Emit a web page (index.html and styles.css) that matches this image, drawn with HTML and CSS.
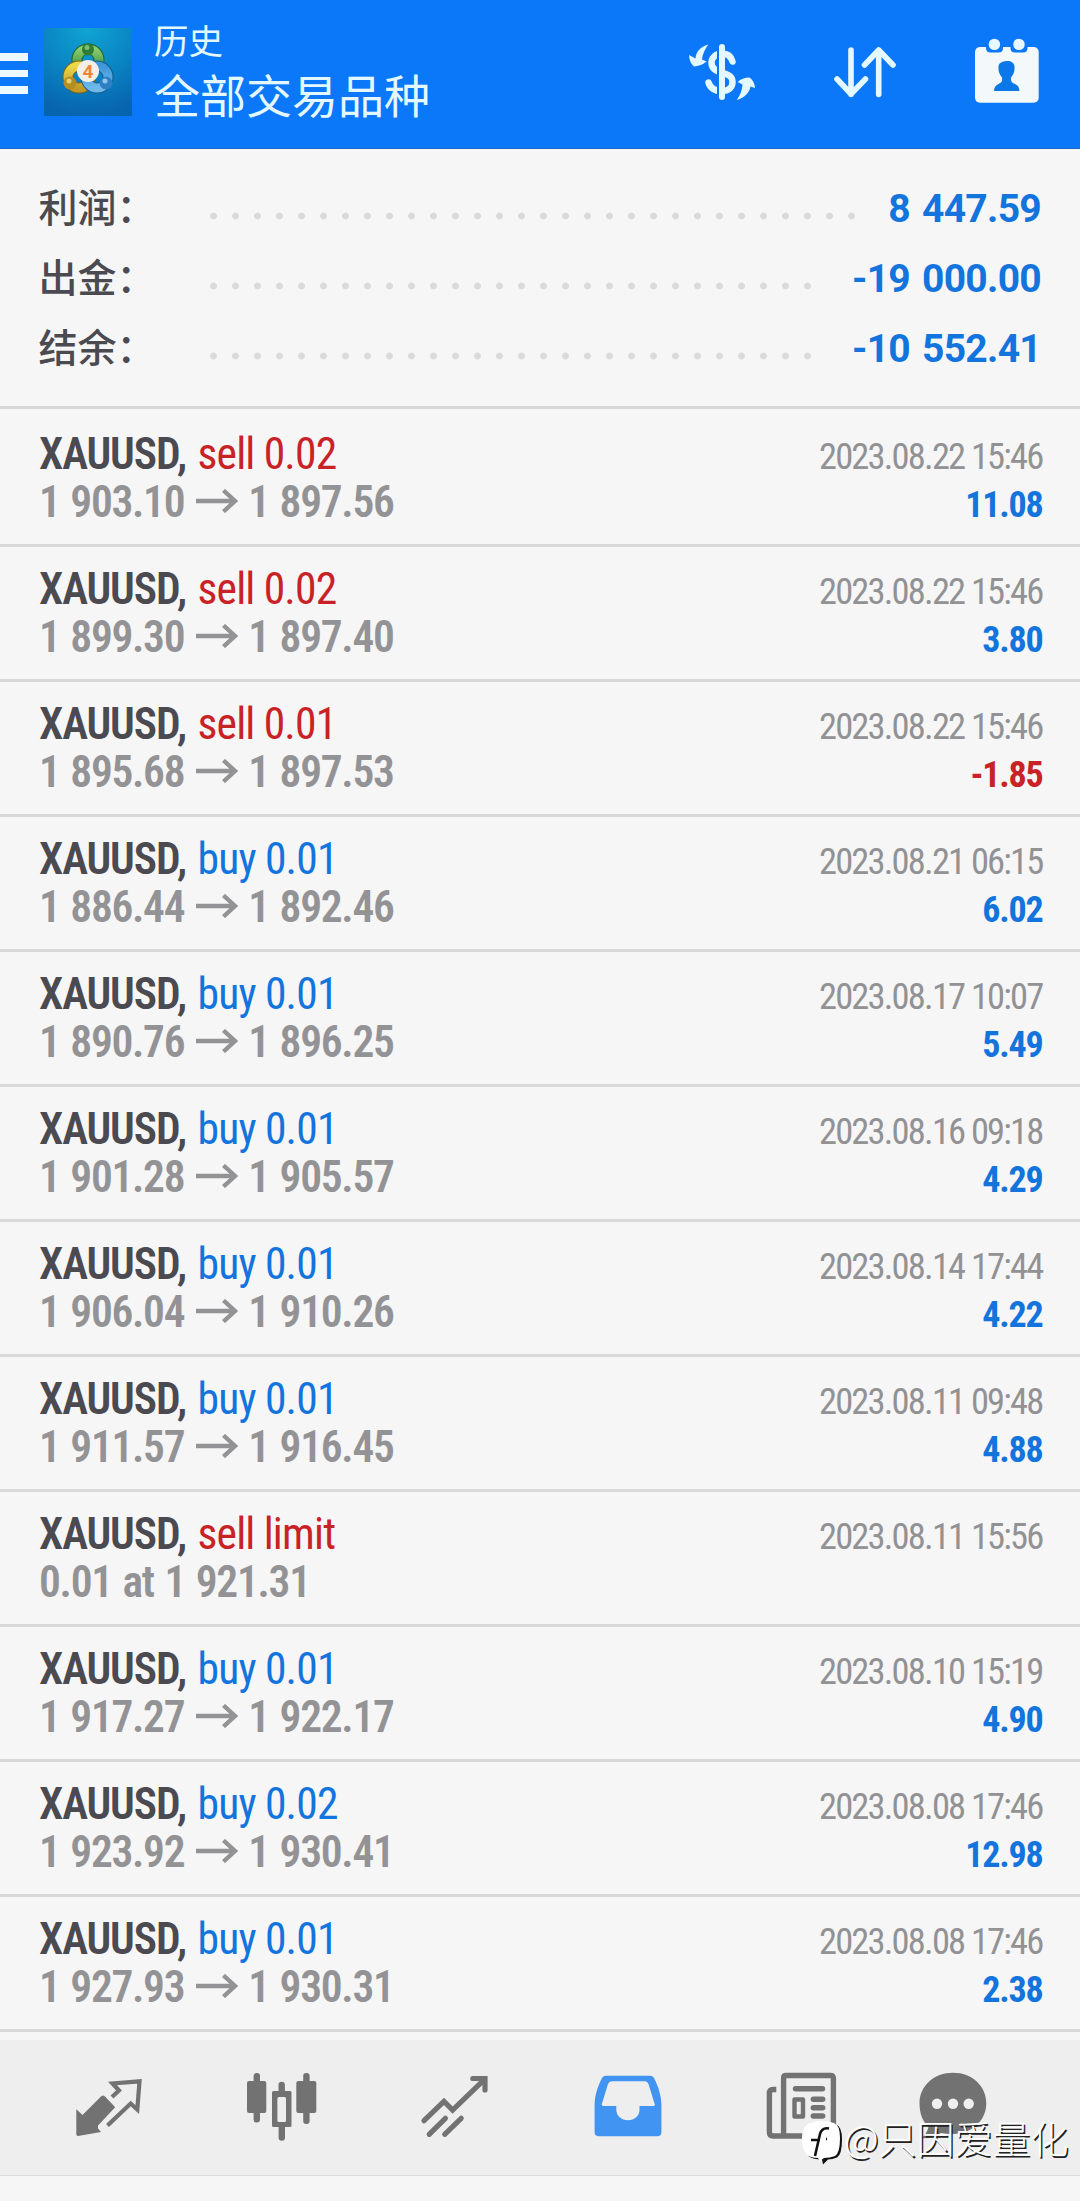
FILE: index.html
```
<!DOCTYPE html>
<html lang="zh-CN">
<head>
<meta charset="utf-8">
<title>历史</title>
<link rel="stylesheet" href="styles.css">
</head>
<body>
<svg class="defs" aria-hidden="true">
  <symbol id="arrow" viewBox="0 0 42 24"><path d="M0 12H39M27.5 1.5L39 12L27.5 22.5" fill="none" stroke="currentColor" stroke-width="4.4"/></symbol>
</svg>

<header class="bar">
  <div class="menu"><i></i><i></i><i></i></div>
  <svg class="logo" viewBox="0 0 88 88">
    <defs>
      <radialGradient id="sky" cx=".5" cy="0" r="1"><stop offset="0" stop-color="#10a5d2"/><stop offset=".5" stop-color="#0a86c4"/><stop offset="1" stop-color="#0764ae"/></radialGradient>
      <linearGradient id="gr" x2="0" y2="1"><stop offset="0" stop-color="#8ccb6e"/><stop offset="1" stop-color="#2f8a3a"/></linearGradient>
      <linearGradient id="ye" x2="0" y2="1"><stop offset="0" stop-color="#ecd848"/><stop offset="1" stop-color="#c39a28"/></linearGradient>
      <linearGradient id="bl" x2="0" y2="1"><stop offset="0" stop-color="#3f97d8"/><stop offset="1" stop-color="#6fb9ea"/></linearGradient>
    </defs>
    <rect width="88" height="88" fill="url(#sky)"/>
    <circle cx="44" cy="32" r="11" fill="none" stroke="#1d662c" stroke-width="11"/>
    <circle cx="44" cy="32" r="11" fill="none" stroke="url(#gr)" stroke-width="9"/>
    <circle cx="35" cy="49" r="11" fill="none" stroke="#73651c" stroke-width="11"/>
    <circle cx="35" cy="49" r="11" fill="none" stroke="url(#ye)" stroke-width="9"/>
    <circle cx="53" cy="49" r="11" fill="none" stroke="#155a8e" stroke-width="11"/>
    <circle cx="53" cy="49" r="11" fill="none" stroke="url(#bl)" stroke-width="9"/>
    <circle cx="44" cy="21.500" r="6" fill="#2e7c35"/><circle cx="43" cy="19.500" r="2.500" fill="#7dbf72"/>
    <circle cx="26" cy="55" r="6.500" fill="#b28d23"/><circle cx="25" cy="53" r="2.500" fill="#ead06a"/>
    <circle cx="62" cy="55" r="6.500" fill="#2f7fc4"/><circle cx="61" cy="53" r="2.500" fill="#8cc6ee"/>
    <circle cx="44" cy="43" r="11" fill="#f4eee8"/>
    <text x="44" y="49.500" class="four">4</text>
  </svg>
  <div class="titles"><div class="t1">历史</div><div class="t2">全部交易品种</div></div>
  <div class="tools">
    <svg viewBox="0 0 80 80">
      <g fill="#e4f8ff">
        <path d="M26.300 12.500C18 15 14 20 13.500 26.500L7 23Q7.500 31 12 34.500Q19 34 24.700 29.500L20 27.500C20.500 22 23 17 26.300 12.500Z"/>
        <path d="M54.700 68C63 65.500 67.500 60.500 68.500 54.500L73 56Q72.500 49 67.500 45.500Q60 45.500 55.700 50L60.500 52.500C60 59 58 63.500 54.700 68Z"/>
      </g>
      <path d="M50.500 29.500C49 24 45 21.500 40 21.500C33.500 21.500 29.500 26 29.500 30.500C29.500 36 33 39 40 40.800C47 42.500 50.500 44.500 50.500 50C50.500 56 46 59 40 59C32.500 59 28 55.500 26.500 50.500" fill="none" stroke="#e4f8ff" stroke-width="6.500" stroke-linecap="round"/>
      <path d="M36 16V65" stroke="#0a78f8" stroke-width="2"/>
      <path d="M40 15V65" stroke="#e4f8ff" stroke-width="6" stroke-linecap="round"/>
    </svg>
    <svg viewBox="0 0 80 80"><path d="M26 18V62.500M12 47L26 62L40.500 47M53.700 62.500V18M39.500 33L53.700 18L68 33" fill="none" stroke="#e4f8ff" stroke-width="5.600" stroke-linecap="round" stroke-linejoin="round"/></svg>
    <svg viewBox="0 0 80 80">
      <rect x="8" y="15" width="63.700" height="55.700" rx="5" fill="#f3f8fb"/>
      <path d="M19 14V16Q19 20.500 23.500 20.500H31.500Q36 20.500 36 16V14ZM43.500 14V16Q43.500 20.500 48 20.500H56Q60.500 20.500 60.500 16V14Z" fill="#0a78f8"/>
      <circle cx="27.400" cy="12.400" r="5.700" fill="#e9f8ff"/><circle cx="52" cy="12.400" r="5.700" fill="#e9f8ff"/>
      <path d="M39.500 29C43 28.500 47.500 30.500 47.500 34.500Q48 41 44 45.500C43.500 49.500 45 50.500 48 52Q52.500 54 52.300 59H27Q27 54 31.500 52C34.500 50.500 35.500 49.500 35 45.500Q31 41 31.500 34.500C31.700 31 35 29.500 39.500 29Z" fill="#0a78e8"/>
    </svg>
  </div>
</header>

<section class="summary">
  <div class="sum"><span class="label">利润：</span><i class="dots long"></i><b>8 447.59</b></div>
  <div class="sum"><span class="label">出金：</span><i class="dots"></i><b>-19 000.00</b></div>
  <div class="sum"><span class="label">结余：</span><i class="dots"></i><b>-10 552.41</b></div>
</section>

<main class="deals">
  <article class="deal"><div class="line"><b>XAUUSD,</b><span class="sell">sell 0.02</span><time>2023.08.22 15:46</time></div><div class="line price"><span>1 903.10</span><svg><use href="#arrow"/></svg><span>1 897.56</span><em>11.08</em></div></article>
  <article class="deal"><div class="line"><b>XAUUSD,</b><span class="sell">sell 0.02</span><time>2023.08.22 15:46</time></div><div class="line price"><span>1 899.30</span><svg><use href="#arrow"/></svg><span>1 897.40</span><em>3.80</em></div></article>
  <article class="deal"><div class="line"><b>XAUUSD,</b><span class="sell">sell 0.01</span><time>2023.08.22 15:46</time></div><div class="line price"><span>1 895.68</span><svg><use href="#arrow"/></svg><span>1 897.53</span><em class="loss">-1.85</em></div></article>
  <article class="deal"><div class="line"><b>XAUUSD,</b><span class="buy">buy 0.01</span><time>2023.08.21 06:15</time></div><div class="line price"><span>1 886.44</span><svg><use href="#arrow"/></svg><span>1 892.46</span><em>6.02</em></div></article>
  <article class="deal"><div class="line"><b>XAUUSD,</b><span class="buy">buy 0.01</span><time>2023.08.17 10:07</time></div><div class="line price"><span>1 890.76</span><svg><use href="#arrow"/></svg><span>1 896.25</span><em>5.49</em></div></article>
  <article class="deal"><div class="line"><b>XAUUSD,</b><span class="buy">buy 0.01</span><time>2023.08.16 09:18</time></div><div class="line price"><span>1 901.28</span><svg><use href="#arrow"/></svg><span>1 905.57</span><em>4.29</em></div></article>
  <article class="deal"><div class="line"><b>XAUUSD,</b><span class="buy">buy 0.01</span><time>2023.08.14 17:44</time></div><div class="line price"><span>1 906.04</span><svg><use href="#arrow"/></svg><span>1 910.26</span><em>4.22</em></div></article>
  <article class="deal"><div class="line"><b>XAUUSD,</b><span class="buy">buy 0.01</span><time>2023.08.11 09:48</time></div><div class="line price"><span>1 911.57</span><svg><use href="#arrow"/></svg><span>1 916.45</span><em>4.88</em></div></article>
  <article class="deal"><div class="line"><b>XAUUSD,</b><span class="sell">sell limit</span><time>2023.08.11 15:56</time></div><div class="line price"><span>0.01 at 1 921.31</span></div></article>
  <article class="deal"><div class="line"><b>XAUUSD,</b><span class="buy">buy 0.01</span><time>2023.08.10 15:19</time></div><div class="line price"><span>1 917.27</span><svg><use href="#arrow"/></svg><span>1 922.17</span><em>4.90</em></div></article>
  <article class="deal"><div class="line"><b>XAUUSD,</b><span class="buy">buy 0.02</span><time>2023.08.08 17:46</time></div><div class="line price"><span>1 923.92</span><svg><use href="#arrow"/></svg><span>1 930.41</span><em>12.98</em></div></article>
  <article class="deal"><div class="line"><b>XAUUSD,</b><span class="buy">buy 0.01</span><time>2023.08.08 17:46</time></div><div class="line price"><span>1 927.93</span><svg><use href="#arrow"/></svg><span>1 930.31</span><em>2.38</em></div></article>
</main>

<nav class="tabs">
  <a class="tab"><svg viewBox="0 0 80 80">
    <path d="M38.500 60.500L61.700 38.500L68.300 44.500L70.500 16.300L43.500 18.500L50 25.500L43 32" fill="none" stroke="currentColor" stroke-width="4.200"/>
    <path d="M7.300 44.300L13.500 50L32 31.500Q34 29.500 36 31.500L46.200 42.300L29 60.500V63.500L32 67L9 71Q7.300 71 7.300 69Z" fill="currentColor"/>
  </svg></a>
  <a class="tab"><svg viewBox="0 0 80 80" fill="currentColor">
    <rect x="5" y="16" width="19.300" height="32" rx="2"/><rect x="11.600" y="8" width="6.400" height="49.500" rx="3"/>
    <rect x="54.300" y="16" width="20" height="32" rx="2"/><rect x="61.200" y="8" width="6.400" height="51" rx="3"/>
    <path d="M31.500 26H36.500V20a3.200 3.200 0 0 1 6.400 0V26H48Q49.500 26 49.500 27.500V60.500Q49.500 62 48 62H43V72.500a3.200 3.200 0 0 1-6.400 0V62H31.500Q30 62 30 60.500V27.500Q30 26 31.500 26ZM37 32Q35.400 32 35.400 33.500V55.500Q35.400 57 37 57H42.500Q44 57 44 55.500V33.500Q44 32 42.500 32Z" fill-rule="evenodd"/>
  </svg></a>
  <a class="tab"><svg viewBox="0 0 80 80"><path d="M9 55.700L29 36.300L37.600 45L70 13.800M57.800 13.500H70V25M14.200 69.300L30.400 53.300M29.700 69.300L46.200 53.300" fill="none" stroke="currentColor" stroke-width="5.200" stroke-linecap="round"/></svg></a>
  <a class="tab active"><svg viewBox="0 0 80 80"><path d="M18 10.700H62Q65 10.700 66.500 14C70.500 22 73.400 31 73.400 40V67Q73.400 71.300 69 71.300H11Q6.600 71.300 6.600 67V40C6.600 31 9.500 22 13.500 14Q15 10.700 18 10.700ZM24 16.300Q21 16.300 20 19L14 38.500Q13.200 41 15.500 41H28.300V44.500C28.300 51 33.500 55.300 40 55.300S51.500 51 51.500 44.500V41H65.500Q67.500 41 66.500 38.500L60.500 19Q59.500 16.300 57 16.300Z" fill="currentColor" fill-rule="evenodd"/></svg></a>
  <a class="tab"><svg viewBox="0 0 80 80" fill="none" stroke="currentColor">
    <path d="M22.600 13Q22.600 10.500 25 10.500H69.500Q72.400 10.500 72.400 13.500V67.500Q72.400 71 69.500 71H12Q8.400 71 8.400 67V28.500Q8.400 24.500 12 24.500H15.300M22.600 13V71" stroke-width="5.400"/>
    <path d="M34.500 23.700H61.500M52.300 34.300H61.700M52.300 42.700H61.700M52.300 51H61.700" stroke-width="5.400" stroke-linecap="round"/>
    <rect x="33.500" y="34.500" width="8.500" height="17" stroke-width="4.400" stroke-linejoin="round"/>
  </svg></a>
  <a class="tab last"><svg viewBox="0 0 80 80"><path d="M40 7.700C59 7.700 73.300 21 73.300 38.300S59 69 40 69Q33 69 28 68Q20 73 8 73.500Q14 69 15.500 62C10 57 6.500 49 6.500 38.300C6.500 21 21 7.700 40 7.700Z" fill="currentColor"/><g fill="#efefef"><circle cx="24" cy="38.700" r="5.200"/><circle cx="40" cy="38.700" r="5.200"/><circle cx="55.700" cy="38.700" r="5.200"/></g></svg></a>
</nav>

<div class="mark">
  <svg viewBox="0 0 44 46">
    <path d="M8 3Q19-1 32 3Q38 5 38 18Q38 33 33 36Q28 38 24 38L19 43L18 38Q9 38 5 35Q1 30 1 18Q1 6 8 3Z" fill="#111" transform="translate(2 1.500)"/>
    <path d="M8 3Q19-1 32 3Q38 5 38 18Q38 33 33 36Q28 38 22 38L18 41L16 38Q9 38 5 35Q0 30 0 18Q0 6 8 3Z" fill="#fff"/>
    <path d="M27 8.500Q20 7 18 14L13 36M9 20H18M24 19H25" fill="none" stroke="#111" stroke-width="2.600"/>
  </svg>
  <span>@只因爱量化</span>
</div>
</body>
</html>
```
FILE: styles.css
```
* { box-sizing: border-box; }
body {
  margin: 0;
  height: 2201px;
  display: flex;
  flex-direction: column;
  position: relative;
  overflow: hidden;
  background: #f6f6f6;
  font-family: Roboto, "Noto Sans CJK SC", sans-serif;
}
i, em { font-style: normal; }
.defs { position: absolute; width: 0; height: 0; }

.bar {
  height: 149px;
  flex: none;
  display: flex;
  padding-right: 33px;
  background: #0a78f8;
  border-bottom: 1px solid #1a68c0;
}
.menu { display: flex; flex-direction: column; gap: 9px; padding-top: 53px; width: 28px; }
.menu i { height: 7.5px; background: #ecfaff; }
.logo { width: 88px; height: 88px; margin: 28px 0 0 16px; }
.four { font: 700 19px Roboto, sans-serif; fill: #ee8440; text-anchor: middle; }
.titles {
  padding: 14px 0 0 22px;
  color: #e4f8ff;
  font-family: "Noto Sans CJK SC", sans-serif;
  font-weight: 400;
}
.t1 { font-size: 34.5px; line-height: 50px; }
.t2 { font-size: 46px; line-height: 59px; }
.tools { display: flex; gap: 62.5px; margin-left: auto; padding-top: 32px; }
.tools svg { width: 80px; height: 80px; }

.summary { height: 260px; flex: none; padding: 25px 39px 0 38.5px; border-bottom: 3px solid #d9d9d9; }
.sum { display: flex; align-items: center; height: 70px; }
.label {
  width: 171.5px;
  margin-top: -9px;
  font: 500 39px "Noto Sans CJK SC", sans-serif;
  line-height: 60px;
  color: #4a4a50;
}
.dots {
  width: 616px;
  height: 8px;
  margin-top: 13px;
  background: radial-gradient(circle at 3.5px 4px, #dadada 3px, transparent 3.8px) 0 0 / 22px 8px repeat-x;
}
.dots.long { width: 660px; }
.sum b { margin-left: auto; font-size: 39px; letter-spacing: -.7px; word-spacing: 3px; color: #1274dc; }

.deals { padding-top: 3px; flex: none; font-stretch: 75%; }
.deal { height: 135px; padding: 19px 37.5px 0 39px; border-bottom: 3px solid #d9d9d9; }
.line { display: flex; align-items: baseline; height: 48px; line-height: 48px; font-size: 43.5px; }
.line b { font-weight: 600; letter-spacing: -1.1px; width: 158.5px; color: #4a4a50; }
.sell, .buy { letter-spacing: -.8px; }
.sell { color: #c82226; }
.buy { color: #1274dc; }
.line time { margin-left: auto; font-size: 36.5px; letter-spacing: -1.8px; color: #929294; }
.price { color: #939396; font-weight: 600; letter-spacing: -1.3px; word-spacing: 2px; }
.price svg { width: 42px; height: 24px; margin: -4px 10px 0 12px; align-self: center; }
.price em { margin-left: auto; font-size: 36px; font-weight: 700; letter-spacing: -1.2px; color: #1274dc; }
.price em.loss { color: #c82226; }

.tabs {
  height: 136px;
  flex: none;
  margin: auto 0 25px;
  display: flex;
  padding-left: 22px;
  background: #eee;
  border-bottom: 1px solid #dcdcdc;
  color: #727272;
}
.tab { width: 173px; padding-top: 25px; display: flex; justify-content: center; }
.tab.last { width: 132px; }
.tab.active { color: #4294f2; }
.tab svg { width: 80px; height: 80px; flex: none; }

.mark { position: absolute; left: 802px; top: 2108px; display: flex; align-items: center; color: #fff; }
.mark svg { width: 44px; height: 46px; margin-top: 12px; }
.mark span {
  margin-left: -2px;
  font: 300 38px "Noto Sans CJK SC", sans-serif;
  line-height: 54px;
  white-space: nowrap;
  text-shadow: 1.5px 1.5px 0 #222;
}
```
